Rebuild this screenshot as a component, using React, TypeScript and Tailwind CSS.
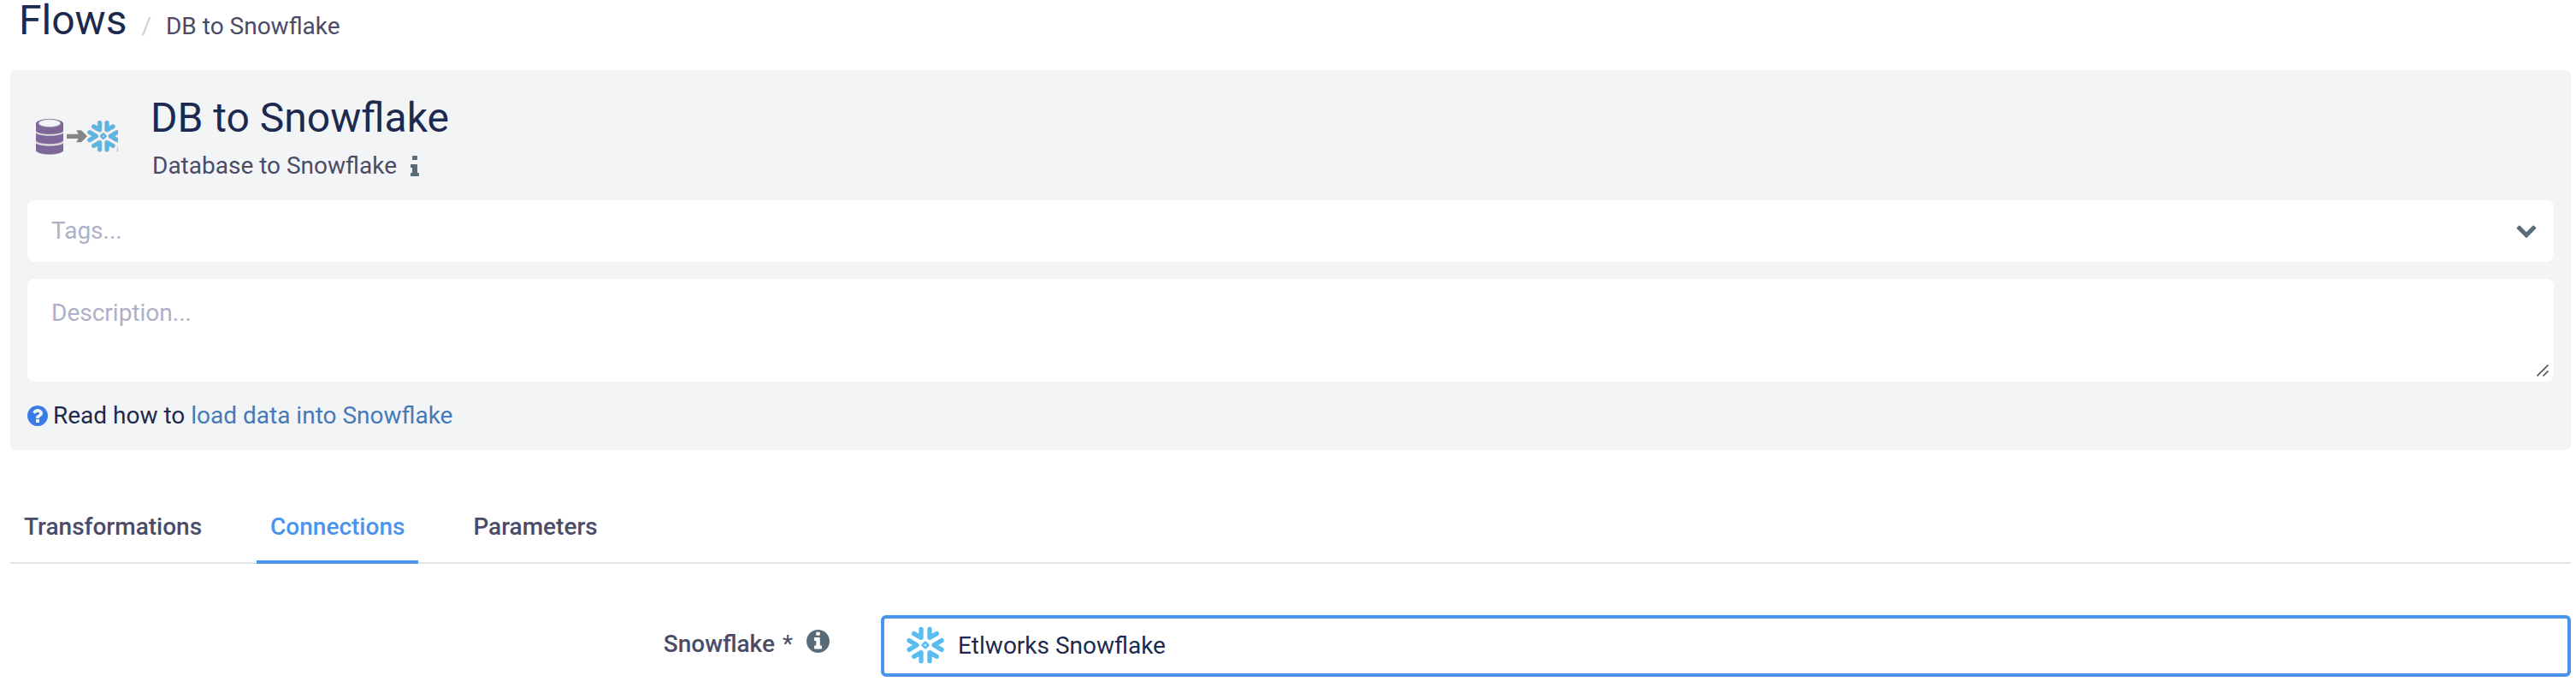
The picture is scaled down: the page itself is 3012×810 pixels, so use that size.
import React, { useState } from "react";

type IconProps = { className?: string };

const disc =
  "M1664 896q0 209-103 385.5t-279.5 279.5-385.5 103-385.5-103-279.5-279.5-103-385.5 103-385.5 279.5-279.5 385.5-103 385.5 103 279.5 279.5 103 385.5z";

function InfoIcon({ className }: IconProps) {
  return (
    <svg viewBox="0 0 640 1536" fill="currentColor" className={className} aria-hidden="true">
      <path d="M640 1344v128q0 26-19 45t-45 19h-512q-26 0-45-19t-19-45v-128q0-26 19-45t45-19h64v-384h-64q-26 0-45-19t-19-45v-128q0-26 19-45t45-19h384q26 0 45 19t19 45v576h64q26 0 45 19t19 45zM512 64v192q0 26-19 45t-45 19h-256q-26 0-45-19t-19-45v-192q0-26 19-45t45-19h256q26 0 45 19t19 45z" />
    </svg>
  );
}

function InfoCircleIcon({ className }: IconProps) {
  return (
    <svg viewBox="128 128 1536 1536" className={className} aria-hidden="true">
      <path d={disc} fill="currentColor" />
      <path
        fill="#fff"
        d="M1152 1376v-160q0-14-9-23t-23-9h-96v-512q0-14-9-23t-23-9h-320q-14 0-23 9t-9 23v160q0 14 9 23t23 9h96v320h-96q-14 0-23 9t-9 23v160q0 14 9 23t23 9h448q14 0 23-9t9-23zM1024 480v-160q0-14-9-23t-23-9h-192q-14 0-23 9t-9 23v160q0 14 9 23t23 9h192q14 0 23-9t9-23z"
      />
    </svg>
  );
}

function QuestionCircleIcon({ className }: IconProps) {
  return (
    <svg viewBox="128 128 1536 1536" className={className} aria-hidden="true">
      <path d={disc} fill="currentColor" />
      <path
        fill="#f3f4f6"
        d="M1024 1376v-192q0-14-9-23t-23-9h-192q-14 0-23 9t-9 23v192q0 14 9 23t23 9h192q14 0 23-9t9-23zM1280 704q0-88-55.5-163t-138.5-116-170-41q-243 0-371 213-15 24 8 42l132 100q7 6 19 6 16 0 25-12 53-68 86-92 34-24 86-24 48 0 85.5 26t37.5 59q0 38-20 61t-68 45q-63 28-115.5 86.5t-52.5 125.5v36q0 14 9 23t23 9h192q14 0 23-9t9-23q0-19 21.5-49.5t54.5-49.5q32-18 49-28.5t46-35 44.5-48 28-60.5 12.5-81z"
      />
    </svg>
  );
}

function ChevronDownIcon({ className }: IconProps) {
  return (
    <svg viewBox="90 506 1612 1062" fill="currentColor" className={className} aria-hidden="true">
      <path d="M1683 808l-742 741q-19 19-45 19t-45-19l-742-741q-19-19-19-45.5t19-45.5l166-165q19-19 45-19t45 19l531 531 531-531q19-19 45-19t45 19l166 165q19 19 19 45.5t-19 45.5z" />
    </svg>
  );
}

function FlakeShape() {
  return (
    <g fill="none" strokeLinecap="round" strokeLinejoin="round">
      <path d="M51 10V40L26 26M81 10V40L106 26M51 122V92L26 106M81 122V92L106 106M9 50L36 66L9 82M123 50L96 66L123 82" />
      <path d="M66 56L76 66L66 76L56 66Z" strokeWidth="8" />
    </g>
  );
}

function SnowflakeIcon({ className }: IconProps) {
  return (
    <svg viewBox="0 0 132 132" className={className} aria-hidden="true">
      <g stroke="#5bbcf0" strokeWidth="16">
        <FlakeShape />
      </g>
    </svg>
  );
}

function FlowIcon({ className }: IconProps) {
  return (
    <svg viewBox="0 0 288 129" className={className} aria-hidden="true">
      <path d="M1 20C1 -4 95 -4 95 20V111C95 134 1 134 1 111Z" fill="#b9b7bd" />
      <path d="M0 20V45C8 60 88 60 96 45V20C88 34 8 34 0 20Z" fill="#7f669b" />
      <path d="M0 20C0 -2 96 -2 96 20C96 40 0 40 0 20Z" fill="#7f669b" />
      <ellipse cx="48" cy="18" rx="38" ry="13" fill="#f3f4f6" stroke="#b9b7bd" strokeWidth="2" />
      <path d="M0 52C10 66 86 66 96 52V79C86 94 10 94 0 79Z" fill="#7f669b" />
      <path d="M0 88C10 102 86 102 96 88V115C86 131 10 131 0 115Z" fill="#7f669b" />
      <path d="M0 49C10 63 86 63 96 49M0 84C10 98 86 98 96 84" fill="none" stroke="#e4e4e8" strokeWidth="4" />
      <path d="M108 56H149L142 43H159L180 64L159 85H142L149 72H108Z" fill="#858585" />
      <g transform="translate(181 8) scale(.84)">
        <g stroke="#b4bcc2" strokeWidth="20">
          <FlakeShape />
        </g>
        <g stroke="#59b5e3" strokeWidth="16">
          <FlakeShape />
        </g>
      </g>
      <path d="M286 103V118" stroke="#b4b4b4" strokeWidth="3" />
    </svg>
  );
}

const tabs = ["Transformations", "Connections", "Parameters"];

export default function App() {
  const [active, setActive] = useState("Connections");

  return (
    <main className="bg-white pr-1.5 pb-5 pl-3 font-[Roboto,sans-serif] text-[28px] leading-10 text-[#1b2a4e]">
      <nav aria-label="Breadcrumb" className="flex items-baseline pl-2.5">
        <h1 className="text-[48px] leading-[48px]">Flows</h1>
        <span className="ml-[17px] text-[#cfcfcf]">/</span>
        <span className="ml-[17px] text-[#4a4c67]">DB to Snowflake</span>
      </nav>

      <section className="mt-[31px] rounded-md bg-[#f3f4f6] px-5 pt-8 pb-5">
        <header className="flex">
          <FlowIcon className="mt-6 ml-2.5 h-[43px] w-24 shrink-0" />
          <div className="ml-[38px]">
            <h2 className="text-[48px] leading-[48px]">DB to Snowflake</h2>
            <p className="mt-3.5 flex items-center gap-4 pl-0.5 leading-9 text-[#4a4c67]">
              Database to Snowflake
              <InfoIcon className="h-6 w-2.5 text-[#576c78]" />
            </p>
          </div>
        </header>

        <div className="mt-[22px] flex h-[72px] items-center rounded-lg bg-white pr-5 pl-7">
          <input
            aria-label="Tags"
            placeholder="Tags..."
            className="min-w-0 flex-1 bg-transparent outline-none placeholder:text-[#aeafc7]"
          />
          <button type="button" aria-label="Show tags" className="text-[#576c78]">
            <ChevronDownIcon className="h-[15px] w-6" />
          </button>
        </div>

        <div className="relative mt-5">
          <textarea
            aria-label="Description"
            placeholder="Description..."
            className="block h-[120px] w-full resize-none rounded-lg bg-white px-7 py-5 outline-none placeholder:text-[#aeafc7]"
          />
          <svg viewBox="0 0 14 14" className="absolute right-1.5 bottom-1.5 size-3.5" aria-hidden="true">
            <path d="M.5 13.5L13.5 .5M7.5 13.5L13.5 7.5" stroke="#555" strokeWidth="1.6" />
          </svg>
        </div>

        <p className="mt-5 flex items-center gap-1.5">
          <QuestionCircleIcon className="size-6 text-[#387be6]" />
          <span>
            Read how to{" "}
            <a href="#load-data" className="text-[#447ab8]">
              load data into Snowflake
            </a>
          </span>
        </p>
      </section>

      <div role="tablist" className="mt-[70px] flex gap-12 border-b-2 border-[#e4e5e5]">
        {tabs.map((tab) => (
          <button
            key={tab}
            type="button"
            role="tab"
            aria-selected={tab === active}
            onClick={() => setActive(tab)}
            className={
              tab === active
                ? "-mb-0.5 border-b-4 border-[#4b94ee] px-4 pb-[19px] font-medium text-[#4b94ee]"
                : "-mb-0.5 border-b-4 border-transparent px-4 pb-[19px] font-medium text-[#4a4c67]"
            }
          >
            {tab}
          </button>
        ))}
      </div>

      <form className="mt-[60px] flex">
        <div className="flex w-[34%] justify-end gap-4 pt-3.5 pr-[60px]">
          <label htmlFor="connection" className="font-medium text-[#4a4c67]">
            Snowflake <span className="ml-0.5 font-normal">*</span>
          </label>
          <InfoCircleIcon className="mt-[3px] size-[27px] text-[#576c78]" />
        </div>
        <div className="relative flex-1">
          <select
            id="connection"
            className="h-[72px] w-full appearance-none rounded-md border-4 border-[#4b94ee] bg-white pl-[86px] outline-none"
          >
            <option>Etlworks Snowflake</option>
          </select>
          <SnowflakeIcon className="pointer-events-none absolute top-[13px] left-[30px] size-11" />
        </div>
      </form>
    </main>
  );
}
